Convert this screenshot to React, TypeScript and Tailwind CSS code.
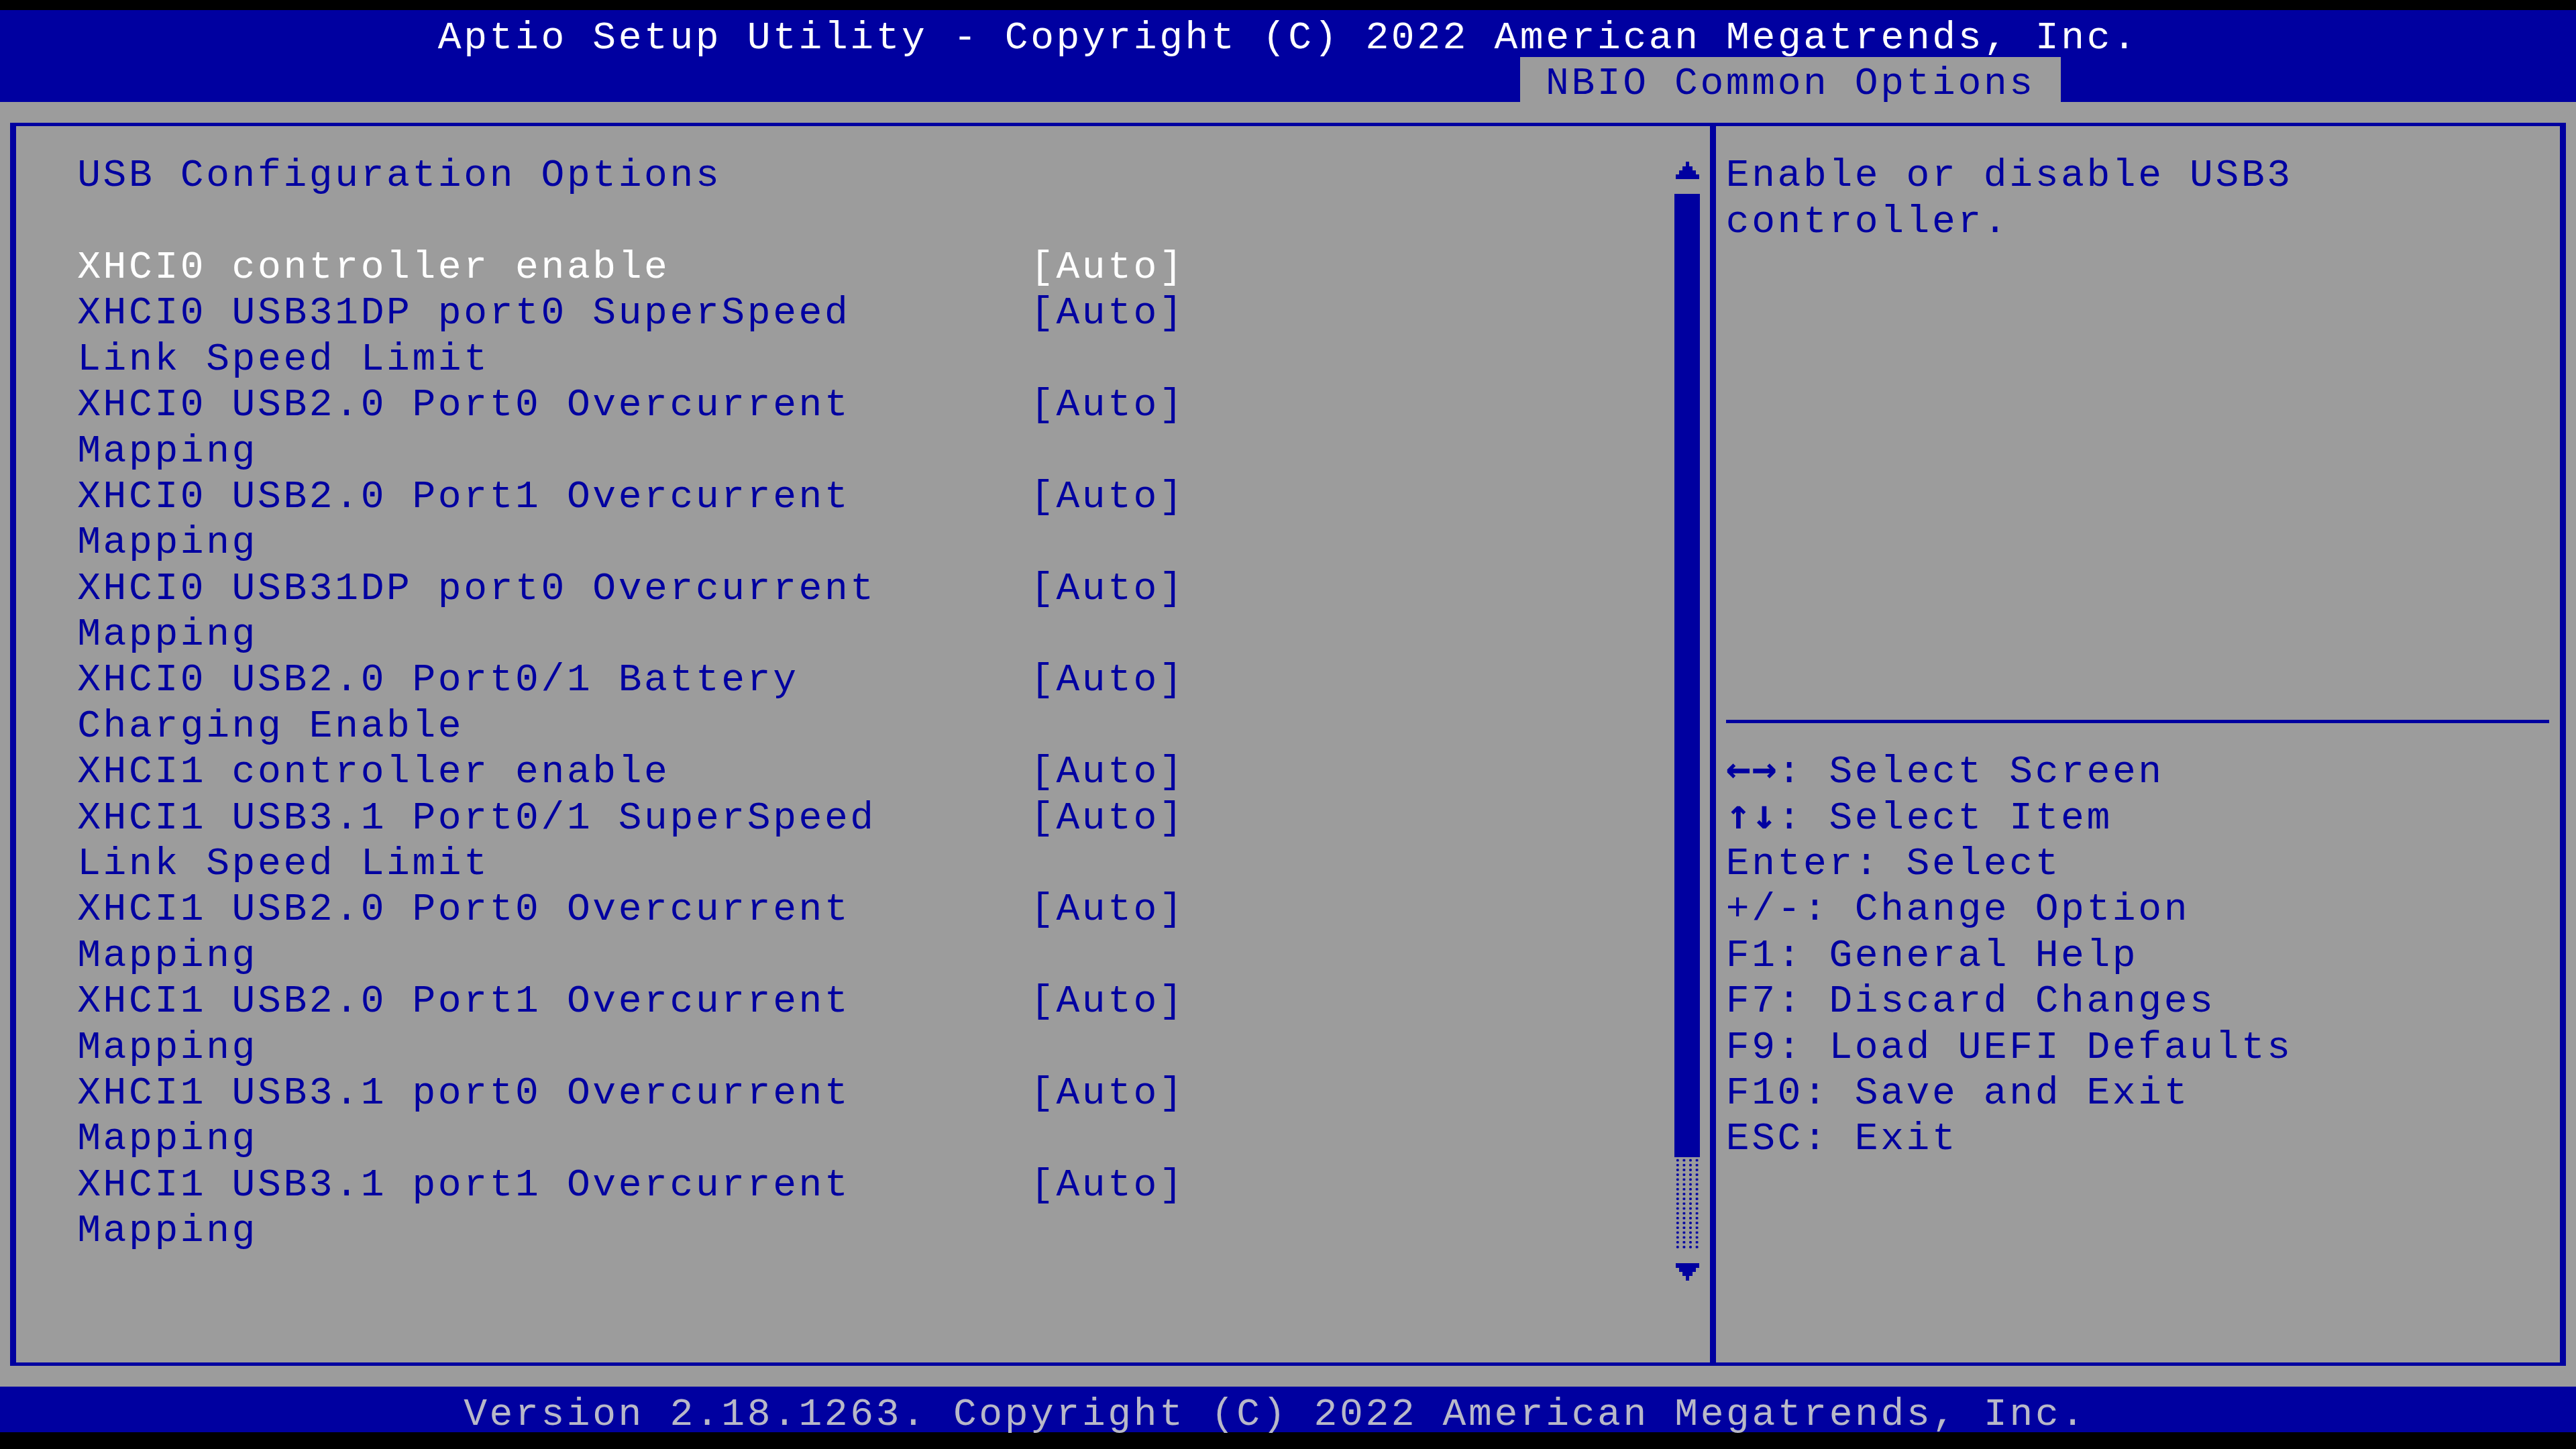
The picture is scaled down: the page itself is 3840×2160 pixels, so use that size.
import type { ReactNode } from "react";
import clsx from "clsx";

type Setting = { lines: string[]; value: string; selected?: boolean };

const settings: Setting[] = [
  { lines: ["XHCI0 controller enable"], value: "[Auto]", selected: true },
  { lines: ["XHCI0 USB31DP port0 SuperSpeed", "Link Speed Limit"], value: "[Auto]" },
  { lines: ["XHCI0 USB2.0 Port0 Overcurrent", "Mapping"], value: "[Auto]" },
  { lines: ["XHCI0 USB2.0 Port1 Overcurrent", "Mapping"], value: "[Auto]" },
  { lines: ["XHCI0 USB31DP port0 Overcurrent", "Mapping"], value: "[Auto]" },
  { lines: ["XHCI0 USB2.0 Port0/1 Battery", "Charging Enable"], value: "[Auto]" },
  { lines: ["XHCI1 controller enable"], value: "[Auto]" },
  { lines: ["XHCI1 USB3.1 Port0/1 SuperSpeed", "Link Speed Limit"], value: "[Auto]" },
  { lines: ["XHCI1 USB2.0 Port0 Overcurrent", "Mapping"], value: "[Auto]" },
  { lines: ["XHCI1 USB2.0 Port1 Overcurrent", "Mapping"], value: "[Auto]" },
  { lines: ["XHCI1 USB3.1 port0 Overcurrent", "Mapping"], value: "[Auto]" },
  { lines: ["XHCI1 USB3.1 port1 Overcurrent", "Mapping"], value: "[Auto]" },
];

const hotkeys: [string, string][] = [
  ["←→", ": Select Screen"],
  ["↑↓", ": Select Item"],
  ["", "Enter: Select"],
  ["", "+/-: Change Option"],
  ["", "F1: General Help"],
  ["", "F7: Discard Changes"],
  ["", "F9: Load UEFI Defaults"],
  ["", "F10: Save and Exit"],
  ["", "ESC: Exit"],
];

// one text row of the 100x31 character screen
function Line({ children, className }: { children?: ReactNode; className?: string }) {
  return <div className={clsx("h-[68.4px] leading-[83.5px] whitespace-pre", className)}>{children}</div>;
}

function ScrollArrow({ down }: { down?: boolean }) {
  return (
    <div className="h-[68.4px] flex items-center justify-center">
      <svg
        width="35"
        height="26"
        viewBox="0 0 7 7"
        preserveAspectRatio="none"
        shapeRendering="crispEdges"
        className={clsx(down && "rotate-180")}
      >
        <polygon
          fill="#0000a0"
          points="3,0 4,0 4,2 5,2 5,3.5 6,3.5 6,5 7,5 7,7 0,7 0,5 1,5 1,3.5 2,3.5 2,2 3,2"
        />
      </svg>
    </div>
  );
}

export default function App() {
  return (
    <div className="w-[3840px] h-[2160px] bg-black flex flex-col overflow-hidden font-['Liberation_Mono',monospace] text-[58px] tracking-[3.6px] text-[#0000a0]">
      <div className="h-[15px] shrink-0" />

      <header className="bg-[#0000a0] shrink-0">
        <Line className="pl-[652.8px] text-white">
          Aptio Setup Utility - Copyright (C) 2022 American Megatrends, Inc.
        </Line>
        <div className="h-[68.4px] flex pl-[2265.6px] pt-[2px]">
          <div className="w-[806.4px] bg-[#9c9c9c]">
            <Line className="pl-[38.4px] -mt-[2px]">NBIO Common Options</Line>
          </div>
        </div>
      </header>

      <main className="h-[1915.2px] shrink-0 bg-[#9c9c9c] pt-[31.7px] pb-[31.3px] px-[14.7px] flex">
        <div className="flex-1 flex border-[#0000a0] border-x-[9px] border-y-[5px]">
          {/* settings list + scrollbar */}
          <section className="w-[2525.4px] flex">
            <div className="flex-1 pt-[31.7px] pl-[91.5px]">
              <Line>USB Configuration Options</Line>
              <Line />
              {settings.map((s, i) => (
                <div key={i} className={clsx("flex", s.selected && "text-white")}>
                  <div className="w-[1420.8px]">
                    {s.lines.map((l, j) => (
                      <Line key={j}>{l}</Line>
                    ))}
                  </div>
                  <Line>{s.value}</Line>
                </div>
              ))}
            </div>
            <div className="w-[38.4px] mr-[14.7px] pt-[31.7px] flex flex-col">
              <ScrollArrow />
              <div className="h-[1436.4px] bg-[#0000a0]" />
              <div className="h-[136.8px] bg-[radial-gradient(circle,#0000a0_1.6px,transparent_2.3px)] bg-[length:9.6px_7.2px] bg-[position:0_1px]" />
              <ScrollArrow down />
            </div>
          </section>

          <div className="w-[9px] bg-[#0000a0]" />

          {/* help pane */}
          <aside className="flex-1 pt-[31.7px] pl-[14.7px]">
            <Line>Enable or disable USB3</Line>
            <Line>controller.</Line>
            {Array.from({ length: 10 }).map((_, i) => (
              <Line key={i} />
            ))}
            <div className="h-[68.4px] flex items-center">
              <div className="w-[1227px] h-[5px] bg-[#0000a0]" />
            </div>
            {hotkeys.map(([arrows, text], i) => (
              <Line key={i}>
                {arrows && (
                  <span className="font-['DejaVu_Sans_Mono',monospace] font-bold text-[62px] leading-[0px] tracking-[1.1px]">
                    {arrows}
                  </span>
                )}
                {text}
              </Line>
            ))}
          </aside>
        </div>
      </main>

      <footer className="bg-[#0000a0] shrink-0">
        <Line className="pl-[691.2px] text-[#b8b8c8]">
          Version 2.18.1263. Copyright (C) 2022 American Megatrends, Inc.
        </Line>
      </footer>
      <div className="flex-1" />
    </div>
  );
}
